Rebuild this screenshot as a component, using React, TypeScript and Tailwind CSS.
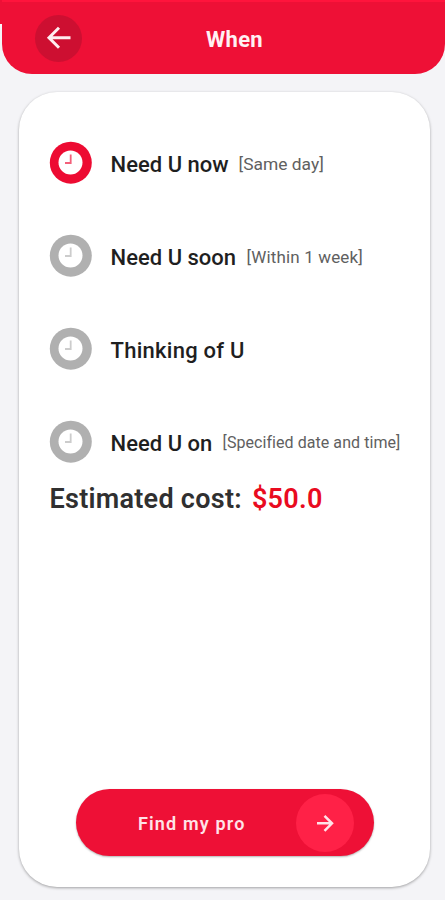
interface TimeOption {
  label: string;
  note?: string;
  labelClass: string;
  noteClass?: string;
  active?: boolean;
}

const options: TimeOption[] = [
  {
    label: "Need U now",
    note: "[Same day]",
    labelClass: "w-[128px]",
    noteClass: "text-[17.4px] pt-[4px]",
    active: true,
  },
  {
    label: "Need U soon",
    note: "[Within 1 week]",
    labelClass: "w-[136px]",
    noteClass: "text-[17px] tracking-[0.15px] pt-[2px]",
  },
  { label: "Thinking of U", labelClass: "w-[140px] tracking-[0.25px]" },
  {
    label: "Need U on",
    note: "[Specified date and time]",
    labelClass: "w-[112px]",
    noteClass: "text-[16px] tracking-[0.06px] pt-[2px]",
  },
];

function ClockIcon({ active }: { active?: boolean }) {
  const color = active ? "#ed0b32" : "#b0b0b0";

  return (
    <svg className="h-[42px] w-[42px] shrink-0 overflow-visible" viewBox="0 0 42 42" fill="none">
      <circle cx="20.8" cy="20.7" r="21" fill={color} />
      <circle cx="20.5" cy="20.6" r="12" fill="#fff" />
      <path d="M20.7 12.5V21H15" stroke={color} strokeWidth="1.8" opacity="0.65" />
    </svg>
  );
}

function Header() {
  return (
    <header className="bg-[linear-gradient(#ee1036_24px,#f9f9fa_24px,#f4f4f7_30px)] pl-[2px]">
      <div className="grid h-[74px] grid-cols-3 items-center rounded-b-[30px] border-t-2 border-[#ff143c] bg-[#ee1036]">
        <button className="ml-[33px] flex h-[47px] w-[47px] items-center justify-center rounded-full bg-[#cd0f31]">
          <svg className="h-[24px] w-[26px]" viewBox="0 0 26 24" fill="none">
            <path d="M24.5 11.8H3M13 1.8L3 11.8L13 21.8" stroke="#ffeef1" strokeWidth="3" />
          </svg>
        </button>
        <h1 className="pt-[4px] pl-[22px] text-center text-[22px] leading-none font-bold tracking-[0.3px] text-[#fff1f3]">
          When
        </h1>
      </div>
    </header>
  );
}

export default function App() {
  return (
    <div className="h-[900px] w-[445px] overflow-hidden bg-[#f4f4f7] font-['Roboto',sans-serif]">
      <Header />
      <main className="mt-[18px] mr-[15px] ml-[19px] flex h-[795px] flex-col rounded-[38px] bg-white pt-[50px] pb-[31px] shadow-[0_1px_3px_rgba(0,0,0,0.35)]">
        <ul className="flex flex-col gap-[51px] pl-[31px]">
          {options.map((option) => (
            <li key={option.label} className="flex h-[42px] items-center whitespace-nowrap">
              <ClockIcon active={option.active} />
              <span
                className={`ml-[18.6px] pt-[4px] text-[22px] leading-none font-medium text-[#1f1f1f] ${option.labelClass}`}
              >
                {option.label}
              </span>
              {option.note && (
                <span className={`leading-none text-[#606060] ${option.noteClass}`}>
                  {option.note}
                </span>
              )}
            </li>
          ))}
        </ul>
        <p className="mt-[22px] ml-[30.5px] flex gap-[10px] text-[27px] leading-[28px] font-semibold tracking-[0.27px] text-[#303030]">
          Estimated cost: <span className="text-[#e90b20]">$50.0</span>
        </p>
        <button className="mt-auto ml-[57px] flex h-[67px] w-[298px] items-center rounded-full bg-[#ee1036] pl-[62px] shadow-[0_1px_2px_rgba(0,0,0,0.3)]">
          <span className="w-[158px] pt-[3px] text-left text-[18px] leading-none font-semibold tracking-[1.15px] text-[#ffe3e8]">
            Find my pro
          </span>
          <span className="flex h-[58px] w-[58px] items-center justify-center rounded-full bg-[#ff2147]">
            <svg className="h-[18px] w-[18px]" viewBox="0 0 18 18" fill="none">
              <path d="M1 9.3H16M8.5 1.8L16 9.3L8.5 16.8" stroke="#ffe3e8" strokeWidth="2.5" />
            </svg>
          </span>
        </button>
      </main>
    </div>
  );
}
